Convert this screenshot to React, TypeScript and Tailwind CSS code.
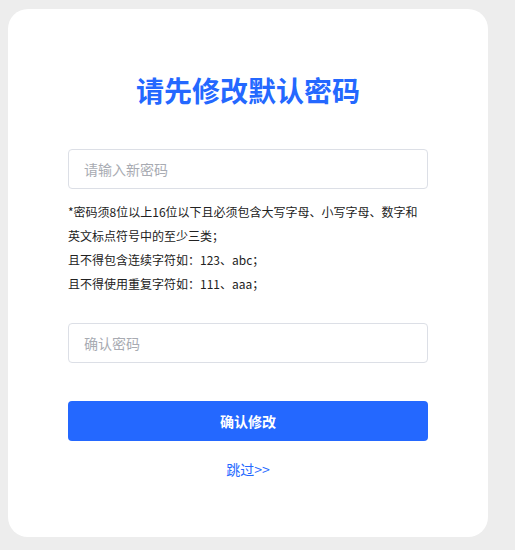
import React from "react";

export default function App() {
  return (
    <div
      className="min-h-[550px] w-full bg-[#ededed] pt-[9px] pl-2"
      style={{ fontFamily: '"Noto Sans CJK SC", "Noto Sans", sans-serif' }}
    >
      <div className="flex h-[528px] w-[480px] flex-col rounded-[20px] bg-white px-[60px] pt-[61px]">
        <h1 className="h-10 text-center text-[28px] font-bold leading-10 text-[#2468ff]">
          请先修改默认密码
        </h1>
        <input
          className="mt-[39px] h-10 w-full rounded-[4px] border border-[#dcdfe6] px-[15px] text-[14px] text-[#333] outline-none placeholder:text-[#a8abb2]"
          placeholder="请输入新密码"
        />
        <div className="mt-[11px] text-[12px] leading-6 text-[#222]">
          <p>*密码须8位以上16位以下且必须包含大写字母、小写字母、数字和英文标点符号中的至少三类；</p>
          <p>且不得包含连续字符如：123、abc；</p>
          <p>且不得使用重复字符如：111、aaa；</p>
        </div>
        <input
          className="mt-[27px] h-10 w-full rounded-[4px] border border-[#dcdfe6] px-[15px] text-[14px] text-[#333] outline-none placeholder:text-[#a8abb2]"
          placeholder="确认密码"
        />
        <button className="mt-[38px] h-10 w-full rounded-[4px] bg-[#2468ff] text-[14px] font-bold text-white">
          确认修改
        </button>
        <div className="mt-[18px] text-center text-[14px] leading-5 text-[#2468ff]">
          跳过&gt;&gt;
        </div>
      </div>
    </div>
  );
}
